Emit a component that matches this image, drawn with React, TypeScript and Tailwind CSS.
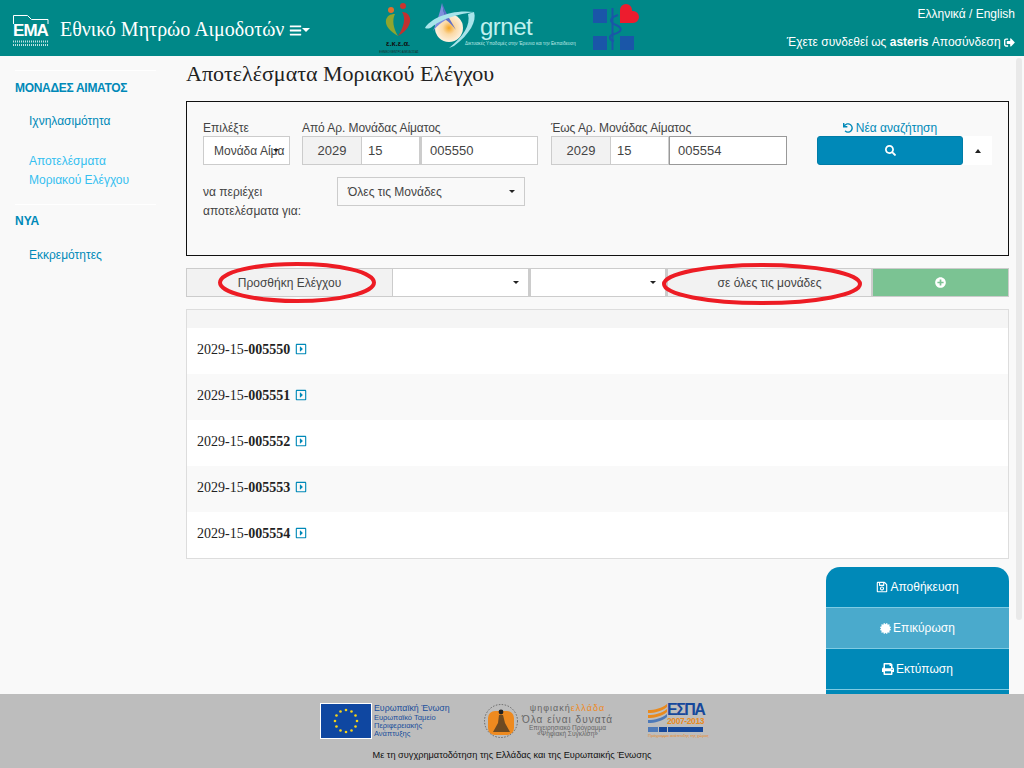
import React from "react";
import {
  FaRegSave,
  FaPrint,
  FaSearch,
  FaUndo,
  FaBars,
  FaSignOutAlt,
  FaPlusCircle,
  FaCertificate,
  FaRegCaretSquareRight,
} from "react-icons/fa";

const sans = { fontFamily: '"Liberation Sans", Arial, sans-serif' };

const Caret = ({ up = false, className = "" }: { up?: boolean; className?: string }) => (
  <span
    className={`inline-block w-0 h-0 border-x-[3px] border-x-transparent ${
      up ? "border-b-[4px] border-b-[#222]" : "border-t-[3px] border-t-[#222]"
    } ${className}`}
  />
);

const EmaLogo = () => (
  <div className="relative w-[36px] h-[36px]">
    <svg width={36} height={34} viewBox="0 0 36 34" fill="none" className="absolute top-0 left-0">
      <path d="M0.5 10V1.5h14l4 4h16.5V10" stroke="#fff" strokeWidth="1" />
      <path d="M0 27.5h35M0 31h35" stroke="#fff" strokeWidth="2" strokeDasharray="1 1" opacity="0.75" />
    </svg>
    <span className="absolute top-[8px] left-0 w-[35px] text-center text-white font-bold text-[17px] leading-[18px] font-['Liberation_Sans'] tracking-[-1px]">
      EMA
    </span>
  </div>
);

const EkeaLogo = () => (
  <svg width={46} height={55} viewBox="0 0 46 55" className="shrink-0">
    <circle cx="15" cy="10" r="3" fill="#e0702c" />
    <circle cx="27" cy="6" r="3" fill="#c9342f" />
    <path d="M22 36C13 31 9 25 10 20c1-4 4-6 9-6-3 6-2 14 3 22z" fill="#8fa52d" />
    <path d="M22 36c9-5 13-12 12-18-1-3-3-6-8-6 4 6 2 15-4 24z" fill="#c1312f" />
    <text x="22" y="46" textAnchor="middle" fontSize="7.5" fontWeight="700" fill="#111" fontFamily="Liberation Sans">ε.κ.ε.α.</text>
    <text x="23" y="52.5" textAnchor="middle" fontSize="2.7" fill="#222" fontFamily="Liberation Sans">ΕΘΝΙΚΟ ΚΕΝΤΡΟ ΑΙΜΟΔΟΣΙΑΣ</text>
  </svg>
);

const GrnetLogo = () => (
  <div className="flex items-start w-[158px] h-[52px] shrink-0">
    <svg width={56} height={52} viewBox="0 0 56 52" className="shrink-0">
      <defs>
        <radialGradient id="sun">
          <stop offset="0" stopColor="#f5a623" />
          <stop offset="0.45" stopColor="#fbd9a5" />
          <stop offset="1" stopColor="#fdf1df" />
        </radialGradient>
      </defs>
      <circle cx="25" cy="28" r="14" fill="url(#sun)" />
      <path d="M18 3C16 12 13 22 9 31c5-6 9-9 13-11-2-6-3-12-4-17z" fill="#7f8fdc" />
      <path d="M18 3c3 9 9 18 14 27-3-4-7-8-10-10-2-6-3-12-4-17z" fill="#5f6fc8" />
      <path d="M1 28C6 19 26 9 50 12 34 14 18 19 9 26c-3 3-6 3-8 2z" fill="#a8e4ea" />
      <path d="M50 12c3 9-4 22-20 34l-5 2c14-11 22-23 19-34z" fill="#a8e4ea" />
    </svg>
    <div className="mt-[14px]">
      <div className="text-[#c0f0ee] text-[24px] leading-[26px] tracking-[-0.5px] font-['Liberation_Sans']">grnet</div>
      <div className="text-[4.6px] leading-[6px] mt-[1px] whitespace-nowrap text-[#bfe8e6] font-['Liberation_Sans'] -ml-[15px]">
        Δικτυακές Υποδομές στην Έρευνα και την Εκπαίδευση
      </div>
    </div>
  </div>
);

const MinistryLogo = () => (
  <svg width={48} height={48} viewBox="0 0 48 48" className="shrink-0">
    <rect x="0" y="6" width="14" height="14" fill="#1a56a8" />
    <rect x="0" y="33" width="14" height="14" fill="#1a56a8" />
    <rect x="27" y="33" width="14" height="14" fill="#1a56a8" />
    <path d="M19.5 5v42" stroke="#1a56a8" strokeWidth="2" />
    <path d="M25 12c-9 3-9 7-2 10 7 3 6 7-2 9-6 2-5 6 0 7" stroke="#1a56a8" strokeWidth="2" fill="none" />
    <path d="M27 20V7a6 6 0 0 1 12 0v1h1a6 6 0 0 1 0 12z" fill="#ed1c2e" />
  </svg>
);

const StarFlag = () => {
  const stars = Array.from({ length: 12 }, (_, i) => {
    const a = (i * Math.PI) / 6;
    return { x: 26 + 11 * Math.cos(a), y: 18 + 11 * Math.sin(a) };
  });
  return (
    <svg width={52} height={36} viewBox="0 0 52 36" className="shrink-0">
      <rect x="0.5" y="0.5" width="51" height="35" fill="#0f47a1" stroke="#fff" strokeWidth="1" />
      {stars.map((s, i) => (
        <circle key={i} cx={s.x} cy={s.y} r="1.3" fill="#f7d417" />
      ))}
    </svg>
  );
};

const DigitalLogo = () => (
  <svg width={34} height={36} viewBox="0 0 34 36" className="shrink-0">
    <circle cx="17" cy="18" r="16.5" fill="none" stroke="#444" strokeWidth="0.7" strokeDasharray="1.5 1.5" />
    <rect x="4" y="8" width="26" height="24" rx="7" fill="#ee8a1f" />
    <circle cx="17" cy="9" r="2.4" fill="#222" />
    <path d="M15 12h4l2 8 5 9H9l5-9z" fill="#6d4a22" />
  </svg>
);

const EspaLogo = () => (
  <div className="flex flex-col w-[56px] shrink-0">
    <div className="flex items-start h-[23px]">
      <svg width={19} height={20} viewBox="0 0 19 20" className="shrink-0 mt-[1px]">
        <path d="M0 6C7 6 14 4 19 0v3C14 7 7 9 0 9z" fill="#e98a1e" />
        <path d="M0 11c7 0 14-2 19-6v3c-5 4-12 6-19 6z" fill="#e98a1e" />
        <path d="M0 16c7 0 14-2 19-6v3c-5 4-12 6-19 6z" fill="#4d79b8" />
      </svg>
      <div className="flex flex-col items-start">
        <span className="text-[16px] leading-[13px] font-bold text-[#16489b] font-['Liberation_Sans'] tracking-[-1.5px]">ΕΣΠΑ</span>
        <span className="text-[8.5px] leading-[10px] font-bold text-[#e98a1e] font-['Liberation_Sans'] tracking-[-0.4px] whitespace-nowrap">2007-2013</span>
      </div>
    </div>
    <div className="flex items-center gap-[1px] h-[6px]">
      <span className="w-[10px] h-[5px] bg-[#4d79b8]" />
      <span className="w-[8px] h-[5px] bg-[#16489b]" />
      <span className="w-[35px] h-[5px] bg-[#16489b]" />
    </div>
    <span className="text-[4px] leading-[7px] text-[#e98a1e] whitespace-nowrap font-['Liberation_Sans']">Πρόγραμμα ανάπτυξης της χώρας</span>
  </div>
);

const Segment = ({ children, className = "" }: { children?: React.ReactNode; className?: string }) => (
  <div className={`h-[29px] border border-[#ccc] flex items-center ${className}`}>{children}</div>
);

const RangeGroup = ({ value, strong }: { value: string; strong?: boolean }) => (
  <div className="flex h-[29px] text-[13px] text-[#444]">
    <div className="w-[60px] border border-[#ccc] bg-[#f2f2f2] flex items-center justify-center">2029</div>
    <div className="w-[58px] border-y border-r border-[#ccc] bg-white flex items-center pl-[6px]">15</div>
    <div
      className={`w-[118px] bg-white flex items-center pl-[8px] border ${
        strong ? "border-[#999]" : "border-[#ccc] border-l-[2px]"
      }`}
    >
      {value}
    </div>
  </div>
);

const rows = ["005550", "005551", "005552", "005553", "005554"];

const SideButton = ({
  children,
  className = "",
}: {
  children: React.ReactNode;
  className?: string;
}) => (
  <div className={`h-[41px] flex items-center justify-center gap-[2px] text-white text-[12px] border-b border-[#7fcbe3] ${className}`}>
    {children}
  </div>
);

export default function App() {
  return (
    <div className="relative h-[768px] overflow-hidden bg-[#f9f9f9] flex flex-col" style={sans}>
      {/* Header */}
      <header className="h-[56px] shrink-0 bg-[#008888] flex text-white">
        <div className="pl-[13px] pt-[14px]">
          <EmaLogo />
        </div>
        <div className="ml-[11px] mt-[16px] flex items-center h-[26px] self-start">
          <span className="text-[20px] font-['Liberation_Serif'] whitespace-nowrap">Εθνικό Μητρώο Αιμοδοτών</span>
          <FaBars size={13} className="ml-[5px] mt-[2px]" />
          <span className="inline-block w-0 h-0 border-x-[4px] border-x-transparent border-t-[4px] border-t-white mt-[1px]" />
        </div>
        <div className="absolute left-[376px] top-0 flex items-start">
          <EkeaLogo />
          <div className="ml-[2px]">
            <GrnetLogo />
          </div>
          <div className="ml-[11px] mt-[3px]">
            <MinistryLogo />
          </div>
        </div>
        <div className="ml-auto pr-[9px] pt-[6px] flex flex-col items-end text-[12px]">
          <span className="leading-[16px]">Ελληνικά / English</span>
          <span className="mt-[12px] leading-[16px] flex items-center whitespace-nowrap">
            Έχετε συνδεθεί ως&nbsp;<b>asteris</b>&nbsp;Αποσύνδεση&nbsp;
            <FaSignOutAlt size={11} />
          </span>
        </div>
      </header>

      <div className="flex flex-1 min-h-0">
        {/* Sidebar */}
        <aside className="w-[186px] shrink-0 pl-[15px] pt-[14px] text-[12px]">
          <div className="w-[141px] border-t border-white pt-[9px]">
            <div className="font-bold text-[#0089b8] leading-[16px] tracking-[-0.3px]">ΜΟΝΑΔΕΣ ΑΙΜΑΤΟΣ</div>
            <div className="pl-[14px] mt-[17px] text-[#0089b8] leading-[16px]">Ιχνηλασιμότητα</div>
            <div className="pl-[14px] mt-[23px] text-[#35c0f0] leading-[19px]">
              Αποτελέσματα
              <br />
              Μοριακού Ελέγχου
            </div>
            <div className="border-t border-white mt-[14px] pt-[8px]">
              <div className="font-bold text-[#0089b8] leading-[16px]">ΝΥΑ</div>
              <div className="pl-[14px] mt-[18px] text-[#0089b8] leading-[16px]">Εκκρεμότητες</div>
            </div>
          </div>
        </aside>

        {/* Main */}
        <main className="w-[823px] shrink-0">
          <h1 className="mt-[5px] text-[22px] leading-[26px] text-[#222] font-['Liberation_Serif'] whitespace-nowrap">Αποτελέσματα Μοριακού Ελέγχου</h1>

          <section className="mt-[14px] h-[155px] border border-[#111] px-[16px] pt-[18px] text-[12px] text-[#444]">
            <div className="flex">
              <div className="w-[87px]">
                <div className="leading-[16px]">Επιλέξτε</div>
                <div className="relative w-[87px] h-[29px] border border-[#ccc] bg-white flex items-center pl-[10px] overflow-hidden whitespace-nowrap">
                  Μονάδα Αίμα
                  <Caret className="absolute right-[10px] top-[12px]" />
                </div>
              </div>
              <div className="ml-[12px]">
                <div className="leading-[16px] tracking-[-0.08px]">Από Αρ. Μονάδας Αίματος</div>
                <RangeGroup value="005550" />
              </div>
              <div className="ml-[13px]">
                <div className="leading-[16px] tracking-[-0.08px]">Έως Αρ. Μονάδας Αίματος</div>
                <RangeGroup value="005554" strong />
              </div>
              <div className="ml-[30px] w-[176px]">
                <div className="w-[146px] leading-[16px] flex items-center justify-center text-[#0089b8]">
                  <FaUndo size={10} className="mr-[3px]" />
                  Νέα αναζήτηση
                </div>
                <div className="flex h-[29px]">
                  <div className="w-[146px] bg-[#0089b8] border border-[#007da8] rounded-[3px] flex items-center justify-center">
                    <FaSearch size={11} className="text-white" />
                  </div>
                  <div className="w-[29px] bg-white flex items-center justify-center">
                    <Caret up />
                  </div>
                </div>
              </div>
            </div>
            <div className="flex mt-[12px]">
              <div className="w-[134px] leading-[19px] mt-[6px]">
                να περιέχει
                <br />
                αποτελέσματα για:
              </div>
              <div className="w-[188px] h-[29px] border border-[#ccc] flex items-center pl-[10px] pr-[9px] justify-between">
                Όλες τις Μονάδες
                <Caret />
              </div>
            </div>
          </section>

          {/* Add control bar */}
          <div className="relative mt-[12px] flex text-[12px] text-[#444]">
            <Segment className="w-[207px] bg-[#f2f2f2] justify-center">Προσθήκη Ελέγχου</Segment>
            <Segment className="w-[136px] bg-white border-l-0 justify-end pr-[9px]">
              <Caret />
            </Segment>
            <Segment className="w-[137px] bg-white border-l-2 justify-end pr-[9px]">
              <Caret />
            </Segment>
            <Segment className="w-[206px] bg-[#f2f2f2] border-l-2 justify-center">σε όλες τις μονάδες</Segment>
            <Segment className="w-[137px] bg-[#7bc393] border-[#6db585] justify-center">
              <FaPlusCircle size={11} className="text-white" />
            </Segment>
            <svg width={158} height={42} viewBox="0 0 158 42" className="absolute left-[32px] top-[-6px]">
              <ellipse cx="79" cy="20.5" rx="77" ry="18.5" fill="none" stroke="#ed1c24" strokeWidth="4" />
            </svg>
            <svg width={200} height={42} viewBox="0 0 200 42" className="absolute left-[476px] top-[-5px]">
              <ellipse cx="100" cy="21" rx="98" ry="19" fill="none" stroke="#ed1c24" strokeWidth="4" />
            </svg>
          </div>

          {/* Results */}
          <div className="mt-[12px] h-[250px] border border-[#ddd] bg-white">
            <div className="h-[18px] bg-[#f5f5f5]" />
            {rows.map((r, i) => (
              <div
                key={r}
                className={`h-[46px] pl-[10px] pb-[4px] flex items-center text-[14px] text-[#222] font-['Liberation_Serif'] ${
                  i % 2 === 1 ? "bg-[#f9f9f9]" : "bg-white"
                }`}
              >
                2029-15-<b>{r}</b>
                <FaRegCaretSquareRight size={12} className="ml-[5px] text-[#0089b8]" />
              </div>
            ))}
          </div>

          {/* Floating actions */}
          <div className="mt-[8px] ml-[640px] w-[183px] rounded-t-[14px] overflow-hidden">
            <SideButton className="bg-[#0089b8]">
              <FaRegSave size={12} />
              Αποθήκευση
            </SideButton>
            <SideButton className="bg-[#4aaacc]">
              <FaCertificate size={11} />
              Επικύρωση
            </SideButton>
            <SideButton className="bg-[#0089b8]">
              <FaPrint size={12} />
              Εκτύπωση
            </SideButton>
            <div className="h-[41px] bg-[#0089b8]" />
          </div>
        </main>
      </div>

      {/* Scrollbar */}
      <div className="absolute right-[2px] top-[58px] w-[6px] h-[562px] rounded-full bg-[#e9e9e9]" />

      {/* Footer */}
      <footer className="absolute bottom-0 left-0 right-0 h-[74px] bg-[#bdbdbd] flex flex-col items-center">
        <div className="h-[54px] w-[390px] flex items-start pt-[9px] pl-[3px]">
          <StarFlag />
          <div className="ml-[2px] w-[76px] text-[#1a4f9c] font-['Liberation_Sans'] leading-[8px] text-[7.5px]">
            <div className="text-[8.8px] leading-[11px] whitespace-nowrap">Ευρωπαϊκή Ένωση</div>
            <div>Ευρωπαϊκό Ταμείο</div>
            <div>Περιφερειακής</div>
            <div>Ανάπτυξης</div>
          </div>
          <div className="ml-[34px]">
            <DigitalLogo />
          </div>
          <div className="ml-[4px] w-[91px] text-center text-[#666] leading-[6px] text-[6.5px] whitespace-nowrap">
            <div className="text-[9px] leading-[11px] tracking-[1px]">
              ψηφιακή<span className="text-[#ee8a1f]">ελλάδα</span>
            </div>
            <div className="text-[10px] leading-[11px] tracking-[1px]">Όλα είναι δυνατά</div>
            <div>Επιχειρησιακό Πρόγραμμα</div>
            <div>«Ψηφιακή Σύγκλιση»</div>
          </div>
          <div className="ml-[35px]">
            <EspaLogo />
          </div>
        </div>
        <div className="text-[9.2px] leading-[12px] text-[#111] mt-[1px]">Με τη συγχρηματοδότηση της Ελλάδας και της Ευρωπαικής Ένωσης</div>
      </footer>
    </div>
  );
}
